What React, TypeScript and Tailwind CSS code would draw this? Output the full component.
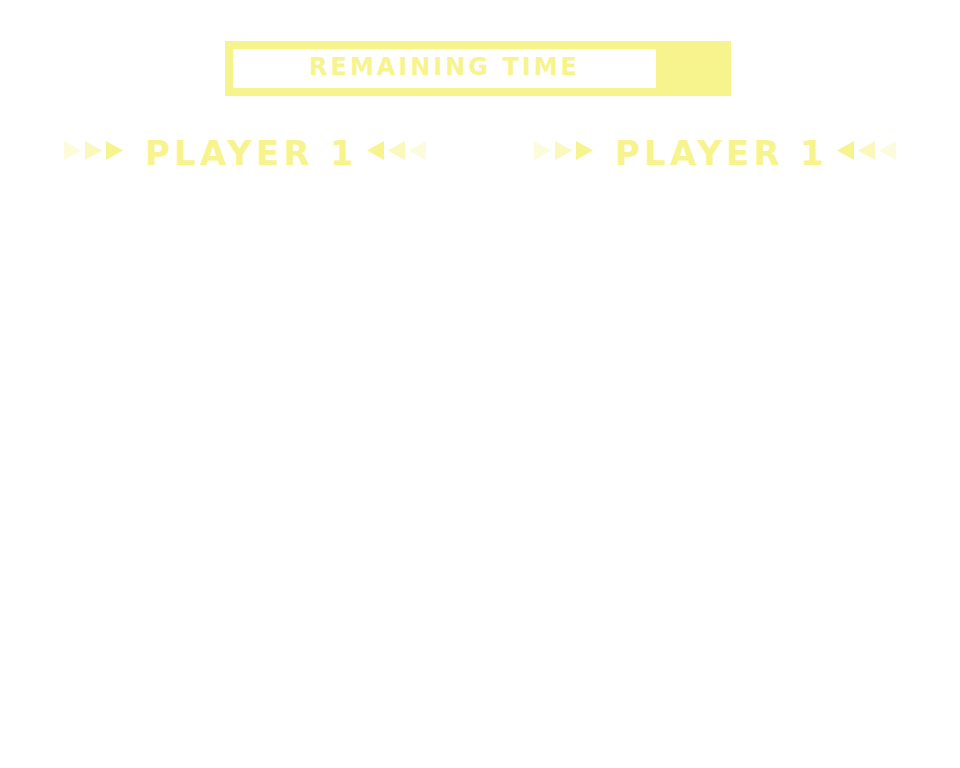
// App.tsx
const YELLOW = '#f7f48d';

// Row of three small triangles on either side of a player name
const Arrows = ({ flip }: { flip?: boolean }) => {
  const opacities = flip ? [1, 0.6, 0.3] : [0.3, 0.6, 1];
  return (
    <div className="flex gap-[4px] pt-[1px]">
      {opacities.map((o, i) => (
        <svg key={i} width="17" height="19" viewBox="0 0 17 19" style={{ opacity: o }}>
          <polygon points={flip ? '17,0 17,19 0,9.5' : '0,0 17,9.5 0,19'} fill={YELLOW} />
        </svg>
      ))}
    </div>
  );
};

const PlayerHeader = () => (
  <div className="flex w-[470px] justify-center items-start">
    <Arrows />
    <span className="ml-[22px] mr-[13px] w-[209px] font-['DejaVu_Sans',sans-serif] font-bold text-[34px] leading-[26px] tracking-[4.2px] whitespace-nowrap text-[#f7f48d]">
      PLAYER 1
    </span>
    <Arrows flip />
  </div>
);

export default function App() {
  return (
    <div className="min-h-[768px] bg-white pt-[41px]">
      {/* Timer bar */}
      <div className="ml-[225px] flex h-[55px] w-[506px] bg-[#f7f48d] p-[8px] pr-0">
        <div className="w-[423px] h-[39px] bg-white flex justify-center pt-[7px]">
          <span className="font-['DejaVu_Sans',sans-serif] font-bold text-[24px] leading-[22px] tracking-[3px] whitespace-nowrap text-[#f7f48d]">
            REMAINING TIME
          </span>
        </div>
      </div>
      {/* Player headers */}
      <div className="mt-[44px] ml-[10px] flex">
        <PlayerHeader />
        <PlayerHeader />
      </div>
    </div>
  );
}
